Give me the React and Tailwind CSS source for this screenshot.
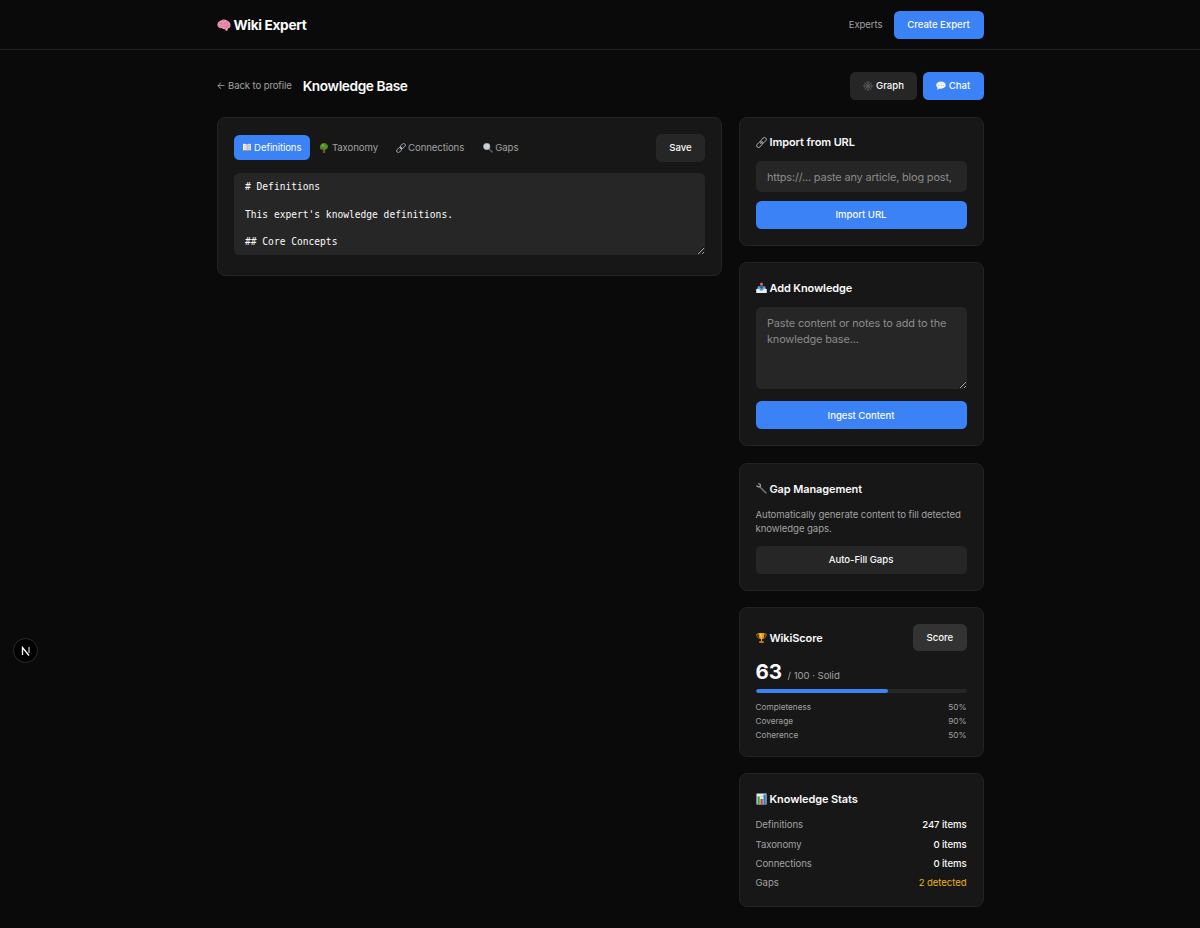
import { useState } from 'react';

const TABS = [
  { id: 'definitions', label: 'Definitions', icon: BookIcon, width: 'w-[76px]' },
  { id: 'taxonomy', label: 'Taxonomy', icon: TreeIcon, width: 'w-[73px]' },
  { id: 'connections', label: 'Connections', icon: LinkIcon, width: 'w-[84px]' },
  { id: 'gaps', label: 'Gaps', icon: MagnifierIcon, width: 'w-[52px]' },
];

const SCORES = [
  { label: 'Completeness', value: 50 },
  { label: 'Coverage', value: 90 },
  { label: 'Coherence', value: 50 },
];

const STATS = [
  { label: 'Definitions', value: '247 items' },
  { label: 'Taxonomy', value: '0 items' },
  { label: 'Connections', value: '0 items' },
  { label: 'Gaps', value: '2 detected', warn: true },
];

const DEFINITIONS = `# Definitions

This expert's knowledge definitions.

## Core Concepts`;

function BrainIcon() {
  return (
    <svg className="w-[14px] h-[14px] shrink-0" viewBox="0 0 28 28" fill="none">
      <path d="M1 15C0 10 4 6 8 5c4-3 9-2 12 0 4 1 7 5 7 9 0 3-1 5-3 6l-2 1-1 4-3 1-2-4c-3 1-5 0-6-2-3 1-8 0-9-5Z" fill="#f29ab4" />
      <path d="M4 12c2-3 5-1 6-4M12 5c0 3 4 2 4 5M19 6c-1 3 3 3 4 6M3 16c3 1 5-1 7 0M9 12c3-1 5 1 7 0s4-1 5 2M11 18c3-3 6 0 9-2l4-1M16 21l5-3" stroke="#c9587c" strokeWidth="1.300" strokeLinecap="round" />
    </svg>
  );
}

function WebIcon() {
  return (
    <svg className="w-[10px] h-[10px] shrink-0" viewBox="0 0 20 20" fill="none" stroke="#6c6c6c" strokeWidth="1">
      <path d="M10 0v20M0 10h20M3 3l14 14M17 3 3 17" />
      <path d="m10 6 3 1 1 3-1 3-3 1-3-1-1-3 1-3ZM10 2l5.500 2.500L18 10l-2.500 5.500L10 18l-5.500-2.500L2 10l2.500-5.500Z" />
    </svg>
  );
}

function ChatIcon() {
  return (
    <svg className="w-[10px] h-[10px] shrink-0" viewBox="0 0 20 20">
      <path d="M10 1c5.500 0 9.500 3 9.500 7.200s-4 7.200-9.500 7.200c-1 0-2 0-3-.4L2.500 18l.8-4.500C1.500 12.500 .5 10.500 .5 8.200c0-4.200 4-7.200 9.500-7.200Z" fill="#f4f4f6" />
      <circle cx="5.500" cy="8.500" r="1" fill="#a0a0a6" />
      <circle cx="10" cy="8.500" r="1" fill="#a0a0a6" />
      <circle cx="14.500" cy="8.500" r="1" fill="#a0a0a6" />
    </svg>
  );
}

function BookIcon() {
  return (
    <svg className="w-[10px] h-[10px] shrink-0" viewBox="0 0 20 20">
      <path d="M1 3h18v14H1z" fill="#5680ad" />
      <path d="M2 2c3-1 6-1 8 1v12c-2-1-5-1-8 0Z" fill="#f3f3ef" />
      <path d="M18 2c-3-1-6-1-8 1v12c2-1 5-1 8 0Z" fill="#dcdcda" />
      <path d="M4 5h4M4 8h4M4 11h4M12 5h4M12 8h4M12 11h4" stroke="#b4b4b4" strokeWidth="1" />
      <path d="M10 3v12" stroke="#777" strokeWidth="1" />
    </svg>
  );
}

function TreeIcon() {
  return (
    <svg className="w-[10px] h-[10px] shrink-0" viewBox="0 0 20 20">
      <path d="M8.500 12h3.500l.5 8H8Z" fill="#85522e" />
      <path d="M10 0c4 0 5 2 6 3 3 2 2 5 1 7s-3 4-5 3c-2 2-4 1-5 0-3 1-5-1-5-4-1-3 1-5 2-6s3-3 6-3Z" fill="#4e8a21" />
      <circle cx="8" cy="4.500" r="3" fill="#74aa31" />
      <circle cx="13" cy="8" r="2" fill="#63982a" />
    </svg>
  );
}

function LinkIcon({ className = 'w-[10px] h-[10px]' }) {
  return (
    <svg className={`${className} shrink-0`} viewBox="0 0 22 22" fill="none" stroke="#b4b8bb" strokeWidth="1.800">
      <rect x="8.500" y="3" width="13" height="7.500" rx="3.700" transform="rotate(-48 15 6.750)" />
      <rect x=".5" y="11.500" width="13" height="7.500" rx="3.700" transform="rotate(-48 7 15.250)" />
      <path d="m8.500 13.700 5-5.500" />
    </svg>
  );
}

function MagnifierIcon() {
  return (
    <svg className="w-[10px] h-[10px] shrink-0" viewBox="0 0 20 20">
      <path d="m12 12 6.500 6" stroke="#666" strokeWidth="2.400" strokeLinecap="round" />
      <circle cx="7.500" cy="7" r="6.500" fill="#cdd1d3" stroke="#a6aaac" strokeWidth="1" />
    </svg>
  );
}

function TrayIcon() {
  return (
    <svg className="w-[11px] h-[12px] shrink-0" viewBox="0 0 22 24">
      <path d="m4 8 14 0 3 8v6H1v-6Z" fill="#3579b5" />
      <path d="M5 9h12l3 6H2Z" fill="#68a5d8" />
      <path d="M.5 14H7l2 3h4l2-3h6.500v8H.5Z" fill="#e9eef2" />
      <path d="M9 5h4v4h3l-5 5-5-5h3Z" fill="#2e5b8e" />
      <circle cx="11" cy="4" r="3.200" fill="#e05a4b" />
    </svg>
  );
}

function WrenchIcon() {
  return (
    <svg className="w-[11px] h-[11px] shrink-0" viewBox="0 0 22 22" fill="none" strokeLinecap="round">
      <path d="m8 8 12 12" stroke="#777b7e" strokeWidth="2.600" />
      <path d="M5 1.500c3 0 4.500 2 3.500 5-2 2-5 1.500-7-.8" stroke="#a4a8aa" strokeWidth="2.300" />
    </svg>
  );
}

function TrophyIcon() {
  return (
    <svg className="w-[11px] h-[12px] shrink-0" viewBox="0 0 22 24" fill="none">
      <path d="M6 4H1.500c0 5 2 8 6 9M16 4h4.500c0 5-2 8-6 9" stroke="#d98a16" strokeWidth="1.600" />
      <path d="M5 2h12c0 6-1 11-5 13v4h-2v-4C6 13 5 8 5 2Z" fill="#e69b1d" />
      <path d="M8 3h3v10C9 11 8 8 8 3Z" fill="#ffd052" />
      <path d="M7 18h8l1 4H6Z" fill="#bb7615" />
    </svg>
  );
}

function ChartIcon() {
  return (
    <svg className="w-[11px] h-[12px] shrink-0" viewBox="0 0 22 24">
      <path d="M1 1h20v22H1z" fill="#e6edf2" />
      <path d="M1 7h20M1 13h20M1 18h20" stroke="#b5c2cc" />
      <path d="M3 7h4.500v16H3z" fill="#35a84c" />
      <path d="M9 12h4.500v11H9z" fill="#d13c35" />
      <path d="M15 3h4.500v20H15z" fill="#2d75c2" />
    </svg>
  );
}

function Card({ children, className = '' }) {
  return (
    <section className={`rounded-[8px] border border-[#232323] bg-[#171717] px-[16px] ${className}`}>
      {children}
    </section>
  );
}

function CardTitle({ icon, children }) {
  return (
    <h2 className="flex h-[17px] items-center gap-[3px] text-[10.960px] font-semibold tracking-[-0.090px] text-[#fafafa]">
      {icon}
      <span>{children}</span>
    </h2>
  );
}

function Button({ variant = 'primary', className = '', children }) {
  const variants = {
    primary: 'bg-[#3b82f6]',
    secondary: 'bg-[#262626]',
    raised: 'bg-[#333333]',
  };
  return (
    <button className={`flex items-center justify-center gap-[3px] rounded-[5.500px] text-[9.600px] font-medium tracking-[-0.040px] text-[#fafafa] ${variants[variant]} ${className}`}>
      {children}
    </button>
  );
}

export default function App() {
  const [tab, setTab] = useState('definitions');
  const [content, setContent] = useState(DEFINITIONS);

  return (
    <div className="relative h-[928px] overflow-hidden bg-[#0a0a0a] text-[#fafafa] font-['Inter',sans-serif]">
      <header className="h-[50px] border-b border-[#232323]">
        <div className="mx-auto flex h-[49px] w-[767px] items-center justify-between">
          <a className="flex items-center gap-[3px] pt-[2px] text-[13.700px] font-bold">
            <BrainIcon />
            <span className="tracking-[-0.350px]">Wiki Expert</span>
          </a>
          <nav className="flex items-center gap-[11px]">
            <a className="pt-[2px] text-[9.600px] tracking-[-0.080px] text-[#a1a1a1]">Experts</a>
            <Button className="h-[28px] w-[90px] pt-px">Create Expert</Button>
          </nav>
        </div>
      </header>

      <main className="mx-auto w-[767px] pt-[22px]">
        <div className="flex h-[28px] items-center justify-between">
          <div className="flex items-center gap-[11px]">
            <a className="pt-px text-[9.600px] tracking-[-0.130px] text-[#a1a1a1]">← Back to profile</a>
            <h1 className="text-[13.700px] font-semibold tracking-[-0.400px]">Knowledge Base</h1>
          </div>
          <div className="flex gap-[5.500px]">
            <Button variant="secondary" className="h-[28px] w-[67px]">
              <WebIcon />
              Graph
            </Button>
            <Button className="h-[28px] w-[61px]">
              <ChatIcon />
              Chat
            </Button>
          </div>
        </div>

        <div className="mt-[16.500px] grid grid-cols-[505.500px_245px] items-start gap-[16.500px]">
          {/* editor */}
          <Card className="h-[159.500px] pt-[16px]">
            <div className="flex items-center justify-between">
              <div className="flex gap-[2.700px]">
                {TABS.map(({ id, label, icon: Icon, width }) => (
                  <button
                    key={id}
                    onClick={() => setTab(id)}
                    className={`flex h-[25px] items-center justify-center gap-[2.500px] rounded-[5.500px] text-[9.600px] tracking-[-0.090px] ${width} ${
                      tab === id ? 'bg-[#3b82f6] text-white' : 'text-[#a1a1a1]'
                    }`}
                  >
                    <Icon />
                    <span className="pt-[2px]">{label}</span>
                  </button>
                ))}
              </div>
              <Button variant="secondary" className="h-[28px] w-[49px] pt-px">Save</Button>
            </div>
            <textarea
              value={content}
              onChange={(e) => setContent(e.target.value)}
              className="mt-[11px] block h-[82px] w-full overflow-hidden rounded-[5.500px] bg-[#262626] px-[11.500px] py-[7.800px] font-['DejaVu_Sans_Mono',monospace] text-[9.600px] leading-[13.700px] outline-none"
            />
          </Card>

          {/* sidebar */}
          <aside className="flex flex-col gap-[16.500px]">
            <Card className="h-[129.300px] pt-[16.500px]">
              <CardTitle icon={<LinkIcon className="w-[11px] h-[11px]" />}>Import from URL</CardTitle>
              <input
                placeholder="https://... paste any article, blog post, or docs"
                className="mt-[10.200px] block h-[31px] w-full rounded-[5.500px] bg-[#262626] px-[11.500px] text-[10.960px] tracking-[-0.180px] outline-none placeholder:text-[#8a8a8a]"
              />
              <Button className="mt-[8.500px] h-[28px] w-full pt-px">Import URL</Button>
            </Card>

            <Card className="h-[184.200px] pt-[16.500px]">
              <CardTitle icon={<TrayIcon />}>Add Knowledge</CardTitle>
              <textarea
                placeholder="Paste content or notes to add to the knowledge base..."
                className="mt-[10.500px] block h-[82px] w-full overflow-hidden rounded-[5.500px] bg-[#262626] px-[11.500px] py-[7.500px] text-[10.960px] leading-[16.450px] tracking-[-0.160px] outline-none placeholder:text-[#8a8a8a]"
              />
              <Button className="mt-[12px] h-[28px] w-full pt-px">Ingest Content</Button>
            </Card>

            <Card className="h-[128px] pt-[16.500px]">
              <CardTitle icon={<WrenchIcon />}>Gap Management</CardTitle>
              <p className="mt-[10.500px] whitespace-nowrap text-[9.600px] leading-[13.700px] tracking-[-0.080px] text-[#a1a1a1]">
                Automatically generate content to fill detected
                <br />
                knowledge gaps.
              </p>
              <Button variant="secondary" className="mt-[11px] h-[28px] w-full">Auto-Fill Gaps</Button>
            </Card>

            <Card className="h-[149.500px] pt-[16px]">
              <div className="flex h-[27px] items-center justify-between">
                <CardTitle icon={<TrophyIcon />}>WikiScore</CardTitle>
                <Button variant="raised" className="h-[27px] w-[53.500px]">Score</Button>
              </div>
              <div className="mt-[8px] flex h-[25px] items-baseline gap-[5.500px] leading-[25px]">
                <span className="text-[20.550px] font-bold">63</span>
                <span className="text-[9.600px] tracking-[-0.050px] text-[#a1a1a1]">/ 100 · Solid</span>
              </div>
              <div className="mt-[5px] h-[4px] overflow-hidden rounded-full bg-[#262626]">
                <div className="h-full rounded-full bg-[#3b82f6]" style={{ width: '63%' }} />
              </div>
              <dl className="mt-[8px] text-[8.220px] leading-[13.700px] text-[#a1a1a1]">
                {SCORES.map((s) => (
                  <div key={s.label} className="flex justify-between">
                    <dt>{s.label}</dt>
                    <dd>{s.value}%</dd>
                  </div>
                ))}
              </dl>
            </Card>

            <Card className="h-[133.200px] pt-[16.500px]">
              <CardTitle icon={<ChartIcon />}>Knowledge Stats</CardTitle>
              <dl className="mt-[10.500px] flex flex-col gap-[5.500px] text-[9.600px] leading-[13.700px] tracking-[-0.080px]">
                {STATS.map((s) => (
                  <div key={s.label} className="flex justify-between">
                    <dt className="text-[#a1a1a1]">{s.label}</dt>
                    <dd className={s.warn ? 'text-[#eab308]' : 'font-medium text-[#fafafa]'}>{s.value}</dd>
                  </div>
                ))}
              </dl>
            </Card>
          </aside>
        </div>
      </main>

      {/* dev tools badge */}
      <div className="absolute left-[13px] top-[638px] flex size-[25px] items-center justify-center rounded-full border border-[#2c2c2c] bg-black">
        <svg className="size-[10px]" viewBox="0 0 20 20" fill="none" strokeWidth="2.600">
          <path d="M3 18V3l13 16" stroke="#fff" />
          <path d="M16 2v12" stroke="#bbb" />
        </svg>
      </div>
    </div>
  );
}
